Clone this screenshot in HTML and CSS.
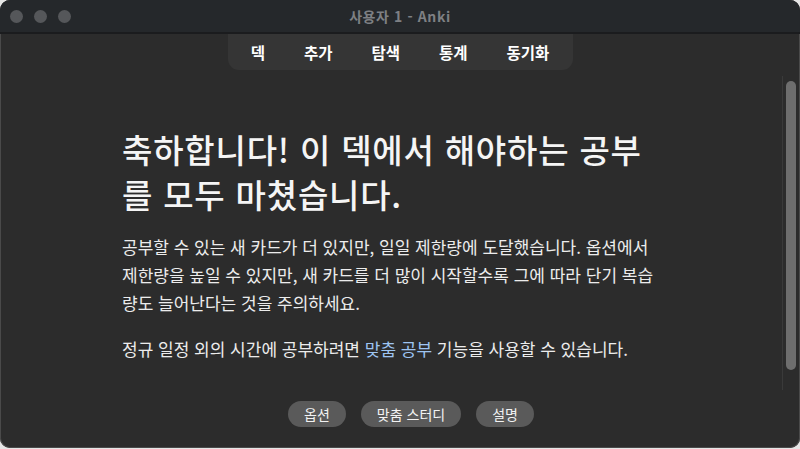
FILE: index.html
```html
<!DOCTYPE html>
<html lang="ko">
<head>
<meta charset="utf-8">
<title>사용자 1 - Anki</title>
<link rel="stylesheet" href="styles.css">
</head>
<body>
<div class="window">
  <header class="titlebar">
    <div class="lights">
      <span class="light"></span><span class="light"></span><span class="light"></span>
    </div>
    <div class="title">사용자 1 - Anki</div>
  </header>
  <div class="body">
    <div class="main">
      <nav class="toolbar">
        <a class="tab">덱</a>
        <a class="tab">추가</a>
        <a class="tab">탐색</a>
        <a class="tab">통계</a>
        <a class="tab">동기화</a>
      </nav>
      <section class="congrats">
        <h1 class="heading">축하합니다! 이 덱에서 해야하는 공부를 모두 마쳤습니다.</h1>
        <p class="text">공부할 수 있는 새 카드가 더 있지만, 일일 제한량에 도달했습니다. 옵션에서 제한량을 높일 수 있지만, 새 카드를 더 많이 시작할수록 그에 따라 단기 복습량도 늘어난다는 것을 주의하세요.</p>
        <p class="text second">정규 일정 외의 시간에 공부하려면 <a class="link">맞춤 공부</a> 기능을 사용할 수 있습니다.</p>
      </section>
      <div class="buttons">
        <button class="btn">옵션</button>
        <button class="btn">맞춤 스터디</button>
        <button class="btn">설명</button>
      </div>
    </div>
    <div class="scrollbar"><div class="thumb"></div></div>
  </div>
</div>
</body>
</html>
```
FILE: styles.css
```css
html, body {
  margin: 0;
  padding: 0;
  background: #e6e6e6;
}
body {
  width: 800px;
  height: 449px;
  overflow: hidden;
  font-family: "Noto Sans CJK KR", "Noto Sans", sans-serif;
}
.window {
  height: 448px;
  border-radius: 10px;
  background: #2c2c2c;
  overflow: hidden;
  display: flex;
  flex-direction: column;
  box-shadow: inset 0 0 0 1px #4a4a4a;
}
.titlebar {
  height: 32px;
  flex: none;
  background: #25282b;
  border-bottom: 2px solid #1b1c1e;
  display: flex;
  align-items: center;
  position: relative;
}
.lights {
  display: flex;
  gap: 11px;
  padding-left: 10px;
}
.light {
  width: 13px;
  height: 13px;
  border-radius: 50%;
  background: #55575a;
}
.title {
  position: absolute;
  left: 0;
  right: 0;
  text-align: center;
  color: #7e8084;
  font-size: 14px;
  letter-spacing: 0.6px;
  font-weight: 700;
  line-height: 32px;
}
.body {
  flex: 1;
  position: relative;
  min-height: 0;
}
.main {
  display: flex;
  flex-direction: column;
  align-items: center;
}
.toolbar {
  width: 345px;
  height: 36px;
  background: #353535;
  border-radius: 0 0 11px 11px;
  display: flex;
  justify-content: center;
  align-items: center;
  gap: 39px;
}
.tab {
  color: #ffffff;
  font-size: 15.5px;
  font-weight: 700;
}
.congrats {
  align-self: stretch;
  width: 534px;
  margin-top: 57px;
  padding-left: 122px;
  color: #ececec;
}
.heading {
  margin: 0;
  font-size: 33px;
  font-weight: 500;
  letter-spacing: 0.8px;
  line-height: 45px;
  color: #f5f5f5;
}
.text {
  margin: 16px 0 0;
  font-size: 17px;
  line-height: 28px;
}
.text.second {
  margin-top: 18px;
}
.link {
  color: #9ec5f2;
}
.buttons {
  margin-top: 38px;
  margin-left: 22px;
  display: flex;
  gap: 15px;
}
.btn {
  height: 26px;
  padding: 0 16px;
  border: none;
  border-radius: 13px;
  background: #5a5a5a;
  color: #f2f2f2;
  font-family: inherit;
  font-size: 14px;
  line-height: 26px;
}
.scrollbar {
  position: absolute;
  top: 42px;
  right: 2px;
  width: 15px;
  height: 309px;
  border-left: 1px solid #3a3a3a;
  display: flex;
  justify-content: center;
  padding-top: 5px;
}
.thumb {
  width: 10px;
  height: 289px;
  border-radius: 5px;
  background: #6e6e6e;
}
```
